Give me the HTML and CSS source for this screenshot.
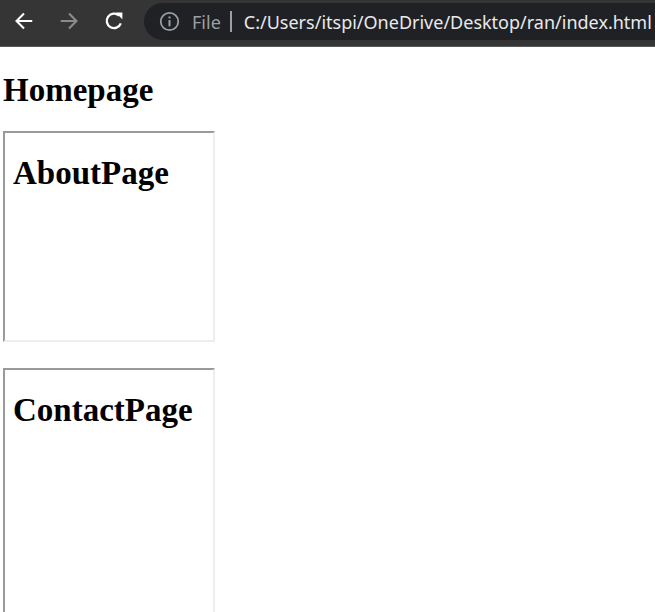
FILE: index.html
```html
<!DOCTYPE html>
<html>
<head>
<meta charset="utf-8">
<link rel="stylesheet" href="styles.css">
</head>
<body>
<header class="toolbar">
  <div class="nav">
    <svg class="btn" width="22" height="22" viewBox="0 0 20 20"><path d="M17.5 10H3.5M10 3.2L3.2 10 10 16.8" fill="none" stroke="#ffffff" stroke-width="1.9"/></svg>
    <svg class="btn" width="22" height="22" viewBox="0 0 20 20"><path d="M2.5 10h14M10 3.2l6.8 6.8-6.8 6.8" fill="none" stroke="#8b8b8b" stroke-width="1.9"/></svg>
    <svg class="btn" width="22" height="22" viewBox="0 0 20 20"><path d="M16.2 12.2A6.6 6.6 0 1 1 14.6 5.1" fill="none" stroke="#ffffff" stroke-width="2.1"/><path d="M11.4 2.2h6.2v6.2z" fill="#ffffff"/></svg>
  </div>
  <div class="omnibox">
    <svg class="info" width="21" height="21" viewBox="0 0 20 20"><circle cx="10" cy="10" r="8.3" fill="none" stroke="#9aa0a6" stroke-width="1.7"/><rect x="9.05" y="8.6" width="1.9" height="6" fill="#9aa0a6"/><rect x="9.05" y="5.2" width="1.9" height="1.9" fill="#9aa0a6"/></svg>
    <span class="scheme">File</span>
    <span class="divider"></span>
    <span class="url">C:/Users/itspi/OneDrive/Desktop/ran/index.html</span>
  </div>
</header>
<main class="page">
  <h1 class="title">Homepage</h1>
  <div class="frame"><h1 class="frame-title">AboutPage</h1></div>
  <div class="frame frame-tall"><h1 class="frame-title">ContactPage</h1></div>
</main>
</body>
</html>
```
FILE: styles.css
```css
html, body {
  margin: 0;
  padding: 0;
  background: #ffffff;
  overflow: hidden;
}
.toolbar {
  height: 46px;
  background: #353535;
  border-bottom: 1px solid #5a5a5a;
  display: flex;
  align-items: flex-start;
  overflow: hidden;
  white-space: nowrap;
}
.nav {
  display: flex;
  align-items: center;
  gap: 23px;
  padding: 10px 0 0 13px;
  width: 131px;
  flex: none;
}
.omnibox {
  flex: none;
  margin-top: 3px;
  height: 37px;
  width: 600px;
  background: #202124;
  border-radius: 19px 0 0 19px;
  display: flex;
  align-items: center;
  padding-left: 15px;
  font-family: "Noto Sans", "Open Sans", sans-serif;
  font-size: 18px;
}
.info { flex: none; }
.scheme {
  color: #9aa0a6;
  margin-left: 12px;
}
.divider {
  width: 2px;
  height: 21px;
  background: #9aa0a6;
  margin: 0 12px 0 9px;
}
.url {
  color: #e8eaed;
}
.page {
  padding-left: 3px;
  font-family: "Liberation Serif", "Times New Roman", serif;
}
.title {
  font-size: 33px;
  font-weight: bold;
  margin: 0;
  padding-top: 24px;
  line-height: 38px;
  height: 60px;
}
.frame {
  box-sizing: border-box;
  width: 212px;
  height: 211px;
  border-style: solid;
  border-width: 2px;
  border-color: #9a9a9a #eeeeee #eeeeee #9a9a9a;
  padding: 21px 8px 0 8px;
  margin-bottom: 26px;
}
.frame-tall {
  height: 246px;
  margin-bottom: 0;
}
.frame-title {
  font-size: 33px;
  font-weight: bold;
  margin: 0;
  line-height: 38px;
}
```
